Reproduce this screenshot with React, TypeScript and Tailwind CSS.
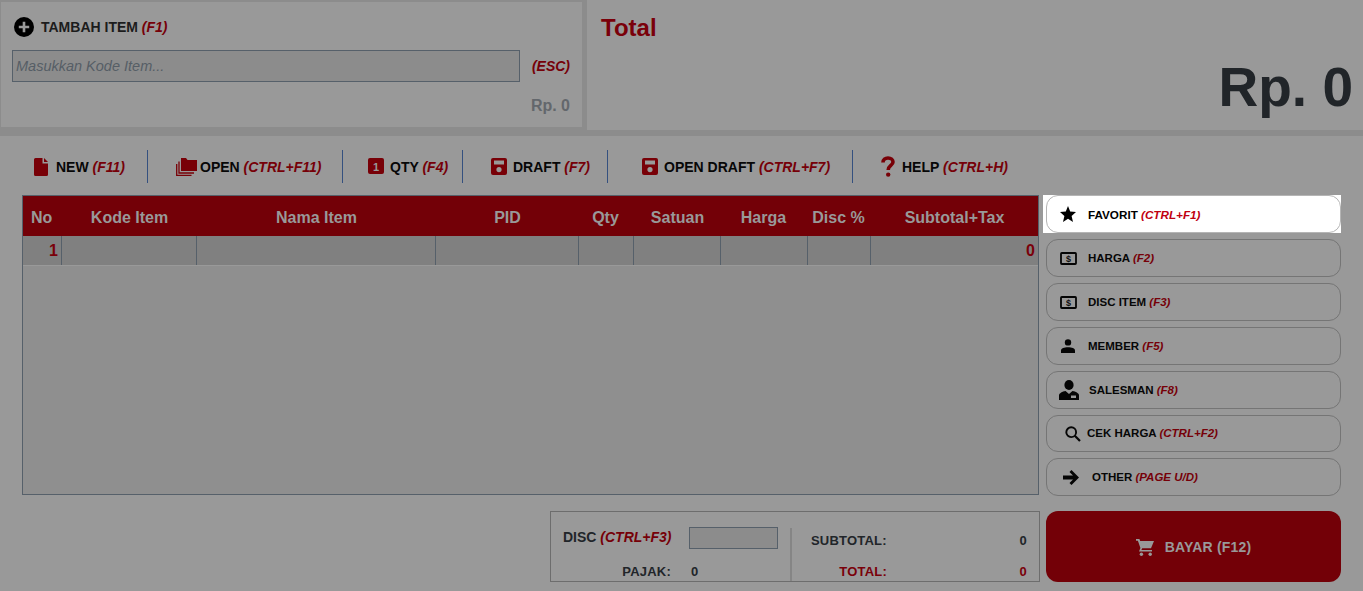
import React from "react";

const RED = "text-[#7a000a]";

function Hotkey({ children }: { children: React.ReactNode }) {
  return <i className="text-[#760008]">{children}</i>;
}

const FileIcon = () => (
  <svg width="14" height="18" viewBox="0 0 14 18" className="shrink-0">
    <path fill="#780007" d="M1.5 0H8.5V5.5H14V16.5A1.5 1.5 0 0 1 12.5 18H1.5A1.5 1.5 0 0 1 0 16.5V1.5A1.5 1.5 0 0 1 1.5 0ZM10 0L14 4H10Z" />
  </svg>
);

const FolderIcon = () => (
  <svg width="21" height="18" viewBox="0 0 21 18" className="shrink-0">
    <path fill="#780007" d="M5 0H10L11.5 2H21V13H5Z" />
    <path fill="none" stroke="#780007" strokeWidth="1.3" d="M3 3.5V15H18M0.7 6V17.4H15.5" />
  </svg>
);

const QtyIcon = () => (
  <svg width="16" height="16" viewBox="0 0 16 16" className="-mt-[2px] shrink-0">
    <rect width="16" height="16" rx="2" fill="#780007" />
    <text x="8" y="12.5" textAnchor="middle" fontSize="11" fontWeight="700" fontFamily="Liberation Sans" fill="#999999">1</text>
  </svg>
);

const SaveIcon = () => (
  <svg width="16" height="17" viewBox="0 0 16 17" className="shrink-0">
    <path fill="#780007" fillRule="evenodd" d="M2 0H14A2 2 0 0 1 16 2V15A2 2 0 0 1 14 17H2A2 2 0 0 1 0 15V2A2 2 0 0 1 2 0ZM3 2.5V6.5H13V2.5ZM8 9A2.6 2.6 0 1 0 8 14.2A2.6 2.6 0 1 0 8 9Z" />
  </svg>
);

const HelpIcon = () => (
  <svg width="14" height="21" viewBox="0 0 14 21" className="shrink-0">
    <path fill="none" stroke="#780007" strokeWidth="3.6" d="M2 6.5C2 3.5 4.2 2 7 2C10 2 12 3.7 12 6C12 9.5 7.2 9.5 7.2 14" />
    <circle cx="7.2" cy="18.6" r="2.2" fill="#780007" />
  </svg>
);

const StarIcon = () => (
  <svg width="16" height="16" viewBox="0 0 16 16" className="shrink-0">
    <path fill="#000" d="M8 0L10.2 5.6L16 6.1L11.6 10L13 16L8 12.8L3 16L4.4 10L0 6.1L5.8 5.6Z" />
  </svg>
);

const MoneyIcon = () => (
  <svg width="17" height="13" viewBox="0 0 17 13" className="shrink-0">
    <rect x="1" y="1" width="15" height="11" rx="0.8" fill="none" stroke="#050505" strokeWidth="1.8" />
    <text x="8.5" y="10" textAnchor="middle" fontSize="9" fontWeight="700" fontFamily="Liberation Sans" fill="#111">$</text>
  </svg>
);

const PersonIcon = () => (
  <svg width="14" height="14" viewBox="0 0 14 14" className="shrink-0">
    <circle cx="7" cy="3.4" r="3.2" fill="#050505" />
    <path fill="#050505" d="M0 14V11.5C0 9.5 3.2 8.3 7 8.3C10.8 8.3 14 9.5 14 11.5V14Z" />
  </svg>
);

const SalesmanIcon = () => (
  <svg width="20" height="20" viewBox="0 0 20 20" className="shrink-0">
    <ellipse cx="10" cy="5" rx="4.6" ry="5" fill="#050505" />
    <path fill="#050505" fillRule="evenodd" d="M0 20V15.5C0 13 3.5 11.6 6.5 11L10 14L13.5 11C16.5 11.6 20 13 20 15.5V20ZM12 15.5V18H17V15.5Z" />
  </svg>
);

const SearchIcon = () => (
  <svg width="16" height="16" viewBox="0 0 16 16" className="shrink-0">
    <circle cx="6.2" cy="6.2" r="4.9" fill="none" stroke="#050505" strokeWidth="1.9" />
    <path stroke="#050505" strokeWidth="2.2" d="M9.8 9.8L15 15" />
  </svg>
);

const ArrowIcon = () => (
  <svg width="16" height="15" viewBox="0 0 16 15" className="shrink-0">
    <path fill="#050505" d="M8.5 0L16 7.5L8.5 15L6.5 13L10 9.4H0V5.6H10L6.5 2Z" />
  </svg>
);

const CartIcon = () => (
  <svg width="18" height="17" viewBox="0 0 18 17" className="shrink-0">
    <path fill="#999999" d="M0 0H3.4L4.2 2H18L15 9.2H6.2L5.4 11H16V12.6H3L4.4 9L1.9 1.7H0Z" />
    <circle cx="5.4" cy="15.2" r="1.7" fill="#999999" />
    <circle cx="14.2" cy="15.2" r="1.7" fill="#999999" />
  </svg>
);

const toolbar = [
  { icon: <FileIcon />, label: "NEW", key: "(F11)", width: "w-[126px]", pad: "pl-[12px]", gap: "gap-[8px]" },
  { icon: <FolderIcon />, label: "OPEN", key: "(CTRL+F11)", width: "w-[195px]", pad: "pl-[28px]", gap: "gap-[3px]" },
  { icon: <QtyIcon />, label: "QTY", key: "(F4)", width: "w-[120px]", pad: "pl-[25px]", gap: "gap-[6px]" },
  { icon: <SaveIcon />, label: "DRAFT", key: "(F7)", width: "w-[145px]", pad: "pl-[28px]", gap: "gap-[6px]" },
  { icon: <SaveIcon />, label: "OPEN DRAFT", key: "(CTRL+F7)", width: "w-[245px]", pad: "pl-[34px]", gap: "gap-[6px]" },
  { icon: <HelpIcon />, label: "HELP", key: "(CTRL+H)", width: "", pad: "pl-[28px]", gap: "gap-[7px]" },
];

const columns = [
  { name: "No", cls: "w-[39px] justify-start pl-[8px]" },
  { name: "Kode Item", cls: "w-[135px] justify-center" },
  { name: "Nama Item", cls: "w-[239px] justify-center" },
  { name: "PID", cls: "w-[143px] justify-center" },
  { name: "Qty", cls: "w-[55px] justify-center pr-[2px]" },
  { name: "Satuan", cls: "w-[87px] justify-center" },
  { name: "Harga", cls: "w-[87px] justify-center pr-[2px]" },
  { name: "Disc %", cls: "w-[63px] justify-center pr-[2px]" },
  { name: "Subtotal+Tax", cls: "flex-1 justify-center" },
];

const sideButtons = [
  { icon: <MoneyIcon />, label: "HARGA", key: "(F2)", pad: "pl-[13px]", gap: "gap-[11px]", h: "h-[38px]" },
  { icon: <MoneyIcon />, label: "DISC ITEM", key: "(F3)", pad: "pl-[13px]", gap: "gap-[11px]", h: "h-[38px]" },
  { icon: <PersonIcon />, label: "MEMBER", key: "(F5)", pad: "pl-[14px]", gap: "gap-[13px]", h: "h-[38px]" },
  { icon: <SalesmanIcon />, label: "SALESMAN", key: "(F8)", pad: "pl-[12px]", gap: "gap-[10px]", h: "h-[38px]" },
  { icon: <SearchIcon />, label: "CEK HARGA", key: "(CTRL+F2)", pad: "pl-[18px]", gap: "gap-[6px]", h: "h-[37px]" },
  { icon: <ArrowIcon />, label: "OTHER", key: "(PAGE U/D)", pad: "pl-[16px]", gap: "gap-[13px]", h: "h-[38px]" },
];

export default function App() {
  return (
    <div className="h-[591px] w-[1363px] overflow-hidden bg-[#8c8c8c] font-['Liberation_Sans',Arial,sans-serif]">
      {/* Top panels */}
      <div className="flex h-[130px] gap-[5px] pl-[1px]">
        <div className="mt-[2px] h-[125px] w-[581px] bg-[#999999] pl-[11px] pr-[12px]">
          <div className="flex h-[46px] items-center gap-[7px] pl-[2px] pt-[5px] text-[14px] font-bold text-[#1c1c1c]">
            <svg width="20" height="20" viewBox="0 0 20 20" className="-mt-[2px] shrink-0">
              <circle cx="10" cy="10" r="10" fill="#000" />
              <path stroke="#999999" strokeWidth="2.6" d="M10 4.8V15.2M4.8 10H15.2" />
            </svg>
            <span>
              TAMBAH ITEM <Hotkey>(F1)</Hotkey>
            </span>
          </div>
          <div className="mt-[2px] flex items-center justify-between">
            <div className="flex h-[32px] w-[508px] items-center border border-[#56606a] bg-[#8c8c8c] pl-[3px] pt-[1px] text-[14.5px] italic text-[#565e66]">
              Masukkan Kode Item...
            </div>
            <b className="text-[14px] italic text-[#760008]">(ESC)</b>
          </div>
          <div className="mt-[12px] text-right text-[16px] font-bold text-[#63676c]">Rp. 0</div>
        </div>
        <div className="flex h-[130px] flex-1 flex-col bg-[#999999] pl-[14px] pr-[10px]">
          <div className={`pt-[14px] text-[24px] font-bold leading-[28px] ${RED}`}>Total</div>
          <div className="mt-[13px] text-right text-[55px] font-bold leading-[64px] text-[#212529]">Rp. 0</div>
        </div>
      </div>

      {/* Main area */}
      <div className="mt-[6px] h-[455px] bg-[#999999] pl-[22px] pt-[14px]">
        <div className="flex h-[33px] items-stretch text-[14px] font-bold text-[#070707]">
          {toolbar.map((t, i) => (
            <div
              key={t.label}
              className={`flex items-center ${t.width} ${t.pad} ${t.gap} ${i < 5 ? "border-r border-[#34507f]" : ""}`}
            >
              {t.icon}
              <span className="whitespace-nowrap pt-[1px]">
                {t.label} <Hotkey>{t.key}</Hotkey>
              </span>
            </div>
          ))}
        </div>

        <div className="mt-[12px] flex gap-[7px]">
          {/* Table */}
          <div className="h-[300px] w-[1017px] border border-[#56606a] bg-[#8f8f8f]">
            <div className="flex h-[40px] bg-[#730007] pt-[3px] text-[16px] font-bold text-[#999999]">
              {columns.map((c) => (
                <div key={c.name} className={`flex items-center ${c.cls}`}>
                  {c.name}
                </div>
              ))}
            </div>
            <div className="flex h-[30px] border-b border-[#999999] bg-[#808080] text-[16px] font-bold text-[#7a000a]">
              <div className="flex w-[39px] items-center justify-end border-r border-[#56606a] pr-[3px]">1</div>
              <div className="w-[135px] border-r border-[#56606a]" />
              <div className="w-[239px] border-r border-[#56606a]" />
              <div className="w-[143px] border-r border-[#56606a]" />
              <div className="w-[55px] border-r border-[#56606a]" />
              <div className="w-[87px] border-r border-[#56606a]" />
              <div className="w-[87px] border-r border-[#56606a]" />
              <div className="w-[63px] border-r border-[#56606a]" />
              <div className="flex flex-1 items-center justify-end pr-[3px]">0</div>
            </div>
          </div>

          {/* Side buttons */}
          <div className="flex w-[295px] flex-col">
            <div className="-ml-[3px] h-[38px] bg-white pl-[3px]">
              <div className="flex h-[38px] items-center gap-[12px] rounded-[12px] border border-[#b5b5b5] pl-[13px] text-[11.7px] font-bold text-black">
                <StarIcon />
                <span className="pt-[1px]">
                  FAVORIT <i className="text-[#c00010]">(CTRL+F1)</i>
                </span>
              </div>
            </div>
            <div className="mt-[6px] flex flex-col gap-[6px]">
              {sideButtons.map((b) => (
                <div
                  key={b.label}
                  className={`flex items-center rounded-[12px] border border-[#757575] text-[11.5px] font-bold text-[#070707] ${b.h} ${b.pad} ${b.gap}`}
                >
                  {b.icon}
                  <span className="pt-[1px]">
                    {b.label} <Hotkey>{b.key}</Hotkey>
                  </span>
                </div>
              ))}
            </div>
          </div>
        </div>

        {/* Bottom totals */}
        <div className="mt-[15px] flex justify-end gap-[6px] pr-[22px]">
          <div className="flex h-[71px] w-[490px] border border-[#6d6d6d] text-[13px] font-bold tracking-[0.2px] text-[#212529]">
            <div className="flex h-[53px] w-[241px] flex-col self-end border-r-2 border-[#858585] pl-[12px]">
              <div className="-mt-[1px] flex items-center">
                <span className="-mt-[1px] w-[126px] whitespace-nowrap text-[14px] tracking-normal">
                  DISC <Hotkey>(CTRL+F3)</Hotkey>
                </span>
                <div className="h-[22px] w-[89px] border border-[#56606a] bg-[#8c8c8c]" />
              </div>
              <div className="mt-[13px] flex">
                <span className="w-[108px] text-right">PAJAK:</span>
                <span className="ml-[20px]">0</span>
              </div>
            </div>
            <div className="flex flex-1 flex-col pl-[19px] pr-[12px] pt-[19px]">
              <div className="flex justify-between">
                <span>SUBTOTAL:</span>
                <span>0</span>
              </div>
              <div className={`mt-[11px] flex justify-between ${RED}`}>
                <span className="w-[76px] pl-[1px] text-right">TOTAL:</span>
                <span>0</span>
              </div>
            </div>
          </div>
          <div className="flex h-[71px] w-[295px] items-center justify-center gap-[11px] rounded-[12px] bg-[#730007] pt-[1px] text-[14px] font-bold tracking-[0.2px] text-[#999999]">
            <CartIcon />
            <span>BAYAR (F12)</span>
          </div>
        </div>
      </div>
    </div>
  );
}
